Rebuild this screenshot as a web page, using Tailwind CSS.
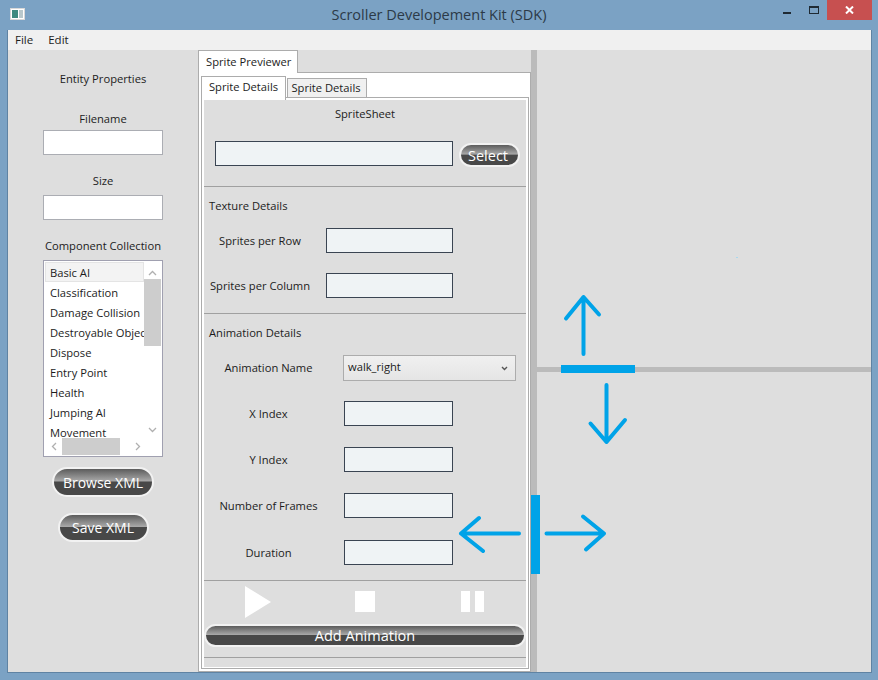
<!DOCTYPE html>
<html lang="en">
<head>
    <meta charset="UTF-8">
    <title>Scroller Developement Kit (SDK)</title>
    <script src="https://cdn.jsdelivr.net/npm/@tailwindcss/browser@4"></script>
</head>
<body class="bg-[#7ba2c4]">
<div class="relative w-[878px] h-[680px] overflow-hidden flex flex-col bg-[#7ba2c4] font-['Open_Sans',sans-serif] text-[11.2px] text-[#1c1c1c]">

    <!-- title bar -->
    <div class="h-[30px] shrink-0 relative flex justify-center pt-[4px] text-[14.5px] text-[#2c3a48]">
        <div class="absolute left-[10px] top-[8px] w-[15px] h-[12px] bg-white border border-[#d8d8d8] flex p-[1px] gap-[1px]">
            <div class="w-[6px] bg-[#3d8a80]"></div>
            <div class="w-[4px] bg-[#b9c8cc]"></div>
        </div>
        <span>Scroller Developement Kit (SDK)</span>
        <div class="absolute left-[783px] top-[12px] w-[8px] h-[2px] bg-[#1f2a33]"></div>
        <div class="absolute left-[809px] top-[6px] w-[10px] h-[8px] border border-t-2 border-[#1f2a33]"></div>
        <div class="absolute left-[827px] top-0 w-[45px] h-[20px] bg-[#c75050] flex items-center justify-center">
            <svg width="9" height="8" viewBox="0 0 9 8"><path d="M1 0.5 L8 7.5 M8 0.5 L1 7.5" stroke="#fff" stroke-width="2"/></svg>
        </div>
    </div>

    <!-- window client -->
    <div class="ml-[7px] mr-[6px] h-[643px] shrink-0 border border-t-0 border-[#5f83a3] flex flex-col bg-[#dedede]">
        <div class="h-[20px] shrink-0 bg-[#f0f0f0] flex items-center pl-[7px] gap-[15px] text-[11.5px]">
            <span>File</span>
            <span>Edit</span>
        </div>

        <div class="flex flex-1 min-h-0">
            <!-- entity properties -->
            <div class="w-[190px] shrink-0 flex flex-col items-center">
                <div class="mt-[20px] h-[18px] leading-[18px]">Entity Properties</div>
                <div class="mt-[21px] h-[18px] leading-[20px]">Filename</div>
                <div class="mt-[3px] w-[120px] h-[25px] bg-white border border-[#abadb3]"></div>
                <div class="mt-[17px] h-[18px] leading-[18px]">Size</div>
                <div class="mt-[5px] w-[120px] h-[25px] bg-white border border-[#abadb3]"></div>
                <div class="mt-[17px] h-[18px] leading-[18px]">Component Collection</div>
                <div class="mt-[5px] w-[120px] h-[197px] bg-white border border-[#a0a0b0] p-[1px] flex flex-col">
                    <div class="h-[176px] flex">
                        <div class="w-[100px] overflow-hidden whitespace-nowrap">
                            <div class="h-[20px] pl-[4px] bg-[#f3f3f3] border border-[#e4e4e4] leading-[19px]">Basic AI</div>
                            <div class="h-[20px] leading-[21px] pl-[5px]">Classification</div>
                            <div class="h-[20px] leading-[21px] pl-[5px]">Damage Collision</div>
                            <div class="h-[20px] leading-[21px] pl-[5px]">Destroyable Object</div>
                            <div class="h-[20px] leading-[21px] pl-[5px]">Dispose</div>
                            <div class="h-[20px] leading-[21px] pl-[5px]">Entry Point</div>
                            <div class="h-[20px] leading-[21px] pl-[5px]">Health</div>
                            <div class="h-[20px] leading-[21px] pl-[5px]">Jumping AI</div>
                            <div class="h-[20px] leading-[21px] pl-[5px]">Movement</div>
                        </div>
                        <div class="w-[17px] flex flex-col items-center">
                            <svg class="mt-[8px]" width="9" height="6" viewBox="0 0 9 6"><path d="M1 5 L4.5 1.5 L8 5" fill="none" stroke="#b0b0b0" stroke-width="1.3"/></svg>
                            <div class="mt-[3px] w-full h-[67px] bg-[#cdcdcd]"></div>
                            <svg class="mt-[81px]" width="9" height="6" viewBox="0 0 9 6"><path d="M1 1 L4.5 4.5 L8 1" fill="none" stroke="#b0b0b0" stroke-width="1.3"/></svg>
                        </div>
                    </div>
                    <div class="h-[17px] flex items-center">
                        <svg class="ml-[6px]" width="6" height="9" viewBox="0 0 6 9"><path d="M5 1 L1.5 4.5 L5 8" fill="none" stroke="#b0b0b0" stroke-width="1.3"/></svg>
                        <div class="ml-[5px] w-[58px] h-[17px] bg-[#cdcdcd]"></div>
                        <svg class="ml-[15px]" width="6" height="9" viewBox="0 0 6 9"><path d="M1 1 L4.5 4.5 L1 8" fill="none" stroke="#b0b0b0" stroke-width="1.3"/></svg>
                    </div>
                </div>
                <div class="mt-[10px] w-[102px] h-[30px] rounded-full border-2 border-[#f2f2f2] bg-[linear-gradient(to_bottom,#5c5c5c_0%,#a8a8a8_46%,#484848_50%,#484848_100%)] text-white text-[14px] leading-[28px] text-center">Browse XML</div>
                <div class="mt-[16px] w-[91px] h-[29px] rounded-full border-2 border-[#f2f2f2] bg-[linear-gradient(to_bottom,#5c5c5c_0%,#a8a8a8_46%,#484848_50%,#484848_100%)] text-white text-[14px] leading-[26px] text-center">Save XML</div>
            </div>

            <!-- sprite previewer tabs -->
            <div class="w-[333px] shrink-0 flex flex-col">
                <div class="h-[22px] shrink-0 flex">
                    <div class="relative z-10 w-[100px] h-[23px] bg-white border border-b-0 border-[#acacac] pl-[7px] leading-[22px] whitespace-nowrap">Sprite Previewer</div>
                </div>
                <div class="flex-1 min-h-0 bg-white border border-[#acacac] pl-[2px] pr-[1px] pt-[3px] pb-[2px] flex flex-col">
                    <div class="h-[21px] shrink-0 flex items-start">
                        <div class="relative z-10 w-[85px] h-[24px] bg-white border border-b-0 border-[#acacac] text-center leading-[20px] whitespace-nowrap">Sprite Details</div>
                        <div class="mt-[2px] ml-[1px] w-[80px] h-[20px] bg-[#f0f0f0] border border-[#acacac] text-center leading-[18px] whitespace-nowrap pr-[2px]">Sprite Details</div>
                    </div>
                    <div class="flex-1 min-h-0 bg-white border border-[#acacac] pt-[2px] px-[2px] pb-[1px] flex">
                        <div class="w-full bg-[#dedede] flex flex-col">
                            <div class="h-[28px] shrink-0 text-center leading-[28px]">SpriteSheet</div>
                            <div class="mt-[13px] h-[25px] shrink-0 flex items-start pl-[11px]">
                                <div class="w-[238px] h-[25px] bg-[#eff3f5] border border-[#3a4452]"></div>
                                <div class="mt-[2px] ml-[6px] w-[61px] h-[24px] rounded-full border-2 border-[#f2f2f2] bg-[linear-gradient(to_bottom,#5c5c5c_0%,#a8a8a8_46%,#484848_50%,#484848_100%)] text-white text-[14.5px] leading-[22px] text-center pr-[3px]">Select</div>
                            </div>
                            <div class="mt-[20px] h-[1px] shrink-0 bg-[#a0a0a0]"></div>

                            <div class="h-[38px] shrink-0 pl-[5px] leading-[38px]">Texture Details</div>
                            <div class="mt-[3px] h-[25px] shrink-0 flex items-center">
                                <div class="w-[112px] text-center pt-[1px]">Sprites per Row</div>
                                <div class="ml-[10px] w-[127px] h-[25px] bg-[#eff3f5] border border-[#3a4452]"></div>
                            </div>
                            <div class="mt-[20px] h-[25px] shrink-0 flex items-center">
                                <div class="w-[112px] text-center pt-[1px]">Sprites per Column</div>
                                <div class="ml-[10px] w-[127px] h-[25px] bg-[#eff3f5] border border-[#3a4452]"></div>
                            </div>
                            <div class="mt-[15px] h-[1px] shrink-0 bg-[#a0a0a0]"></div>

                            <div class="h-[38px] shrink-0 pl-[5px] leading-[38px]">Animation Details</div>
                            <div class="mt-[3px] h-[26px] shrink-0 flex items-center">
                                <div class="w-[129px] text-center pt-[1px]">Animation Name</div>
                                <div class="ml-[10px] w-[173px] h-[26px] border border-[#acacac] bg-[linear-gradient(to_bottom,#f0f0f0,#e5e5e5)] flex items-center justify-between pl-[4px] pr-[7px] pb-[2px]">
                                    <span>walk_right</span>
                                    <svg class="mt-[2px]" width="7" height="5" viewBox="0 0 7 5"><path d="M1 1 L3.5 3.5 L6 1" fill="none" stroke="#555" stroke-width="1.4"/></svg>
                                </div>
                            </div>
                            <div class="mt-[20px] h-[25px] shrink-0 flex items-center">
                                <div class="w-[129px] text-center pt-[2px]">X Index</div>
                                <div class="ml-[11px] w-[109px] h-[25px] bg-[#eff3f5] border border-[#3a4452]"></div>
                            </div>
                            <div class="mt-[21px] h-[25px] shrink-0 flex items-center">
                                <div class="w-[129px] text-center pt-[2px]">Y Index</div>
                                <div class="ml-[11px] w-[109px] h-[25px] bg-[#eff3f5] border border-[#3a4452]"></div>
                            </div>
                            <div class="mt-[21px] h-[25px] shrink-0 flex items-center">
                                <div class="w-[129px] text-center pt-[2px]">Number of Frames</div>
                                <div class="ml-[11px] w-[109px] h-[25px] bg-[#eff3f5] border border-[#3a4452]"></div>
                            </div>
                            <div class="mt-[22px] h-[25px] shrink-0 flex items-center">
                                <div class="w-[129px] text-center pt-[1px]">Duration</div>
                                <div class="ml-[11px] w-[109px] h-[25px] bg-[#eff3f5] border border-[#3a4452]"></div>
                            </div>
                            <div class="mt-[15px] h-[1px] shrink-0 bg-[#a0a0a0]"></div>

                            <!-- playback controls -->
                            <div class="h-[43px] shrink-0 flex items-start">
                                <svg class="ml-[41px] mt-[5px]" width="26" height="32" viewBox="0 0 26 32"><path d="M0 0 L26 16 L0 32 Z" fill="#fff"/></svg>
                                <div class="ml-[84px] mt-[10px] w-[20px] h-[21px] bg-white"></div>
                                <div class="ml-[86px] mt-[10px] w-[9px] h-[21px] bg-white"></div>
                                <div class="ml-[5px] mt-[10px] w-[9px] h-[21px] bg-white"></div>
                            </div>
                            <div class="w-[322px] h-[23px] shrink-0 rounded-full border-2 border-[#f2f2f2] bg-[linear-gradient(to_bottom,#5c5c5c_0%,#a8a8a8_46%,#484848_50%,#484848_100%)] text-white text-[14.5px] leading-[19px] text-center">Add Animation</div>
                            <div class="mt-[10px] h-[1px] shrink-0 bg-[#a0a0a0]"></div>
                        </div>
                    </div>
                </div>
            </div>

            <!-- preview panes -->
            <div class="w-[6px] shrink-0 bg-[#bbbbbb]"></div>
            <div class="flex-1 flex flex-col">
                <div class="h-[317px] shrink-0"></div>
                <div class="h-[5px] shrink-0 bg-[#bbbbbb]"></div>
                <div class="flex-1"></div>
            </div>
        </div>
    </div>

    <!-- splitter handles and arrows sit on top of the panes -->
    <div class="absolute left-[531px] top-[495px] w-[9px] h-[79px] bg-[#00a3e8]"></div>
    <div class="absolute left-[561px] top-[365px] w-[74px] h-[8px] bg-[#00a3e8]"></div>
    <div class="absolute left-[736px] top-[257px] w-[2px] h-[1px] bg-[#a9d8ee]"></div>
    <svg class="absolute left-0 top-0" width="878" height="680" viewBox="0 0 878 680" fill="none" stroke="#00a3e8" stroke-width="4" stroke-linecap="round" stroke-linejoin="round">
        <path d="M583.5 354 V297 M566 318.5 L583.5 297 L599 314.5"/>
        <path d="M606.5 385 V442 M590.5 423.5 L606.5 442 L625 420"/>
        <path d="M519 533.5 H461 M479 518 L461 533.5 L483 551"/>
        <path d="M546.5 533.5 H604 M583 516.5 L604 533.5 L586 549.5"/>
    </svg>
</div>
</body>
</html>
